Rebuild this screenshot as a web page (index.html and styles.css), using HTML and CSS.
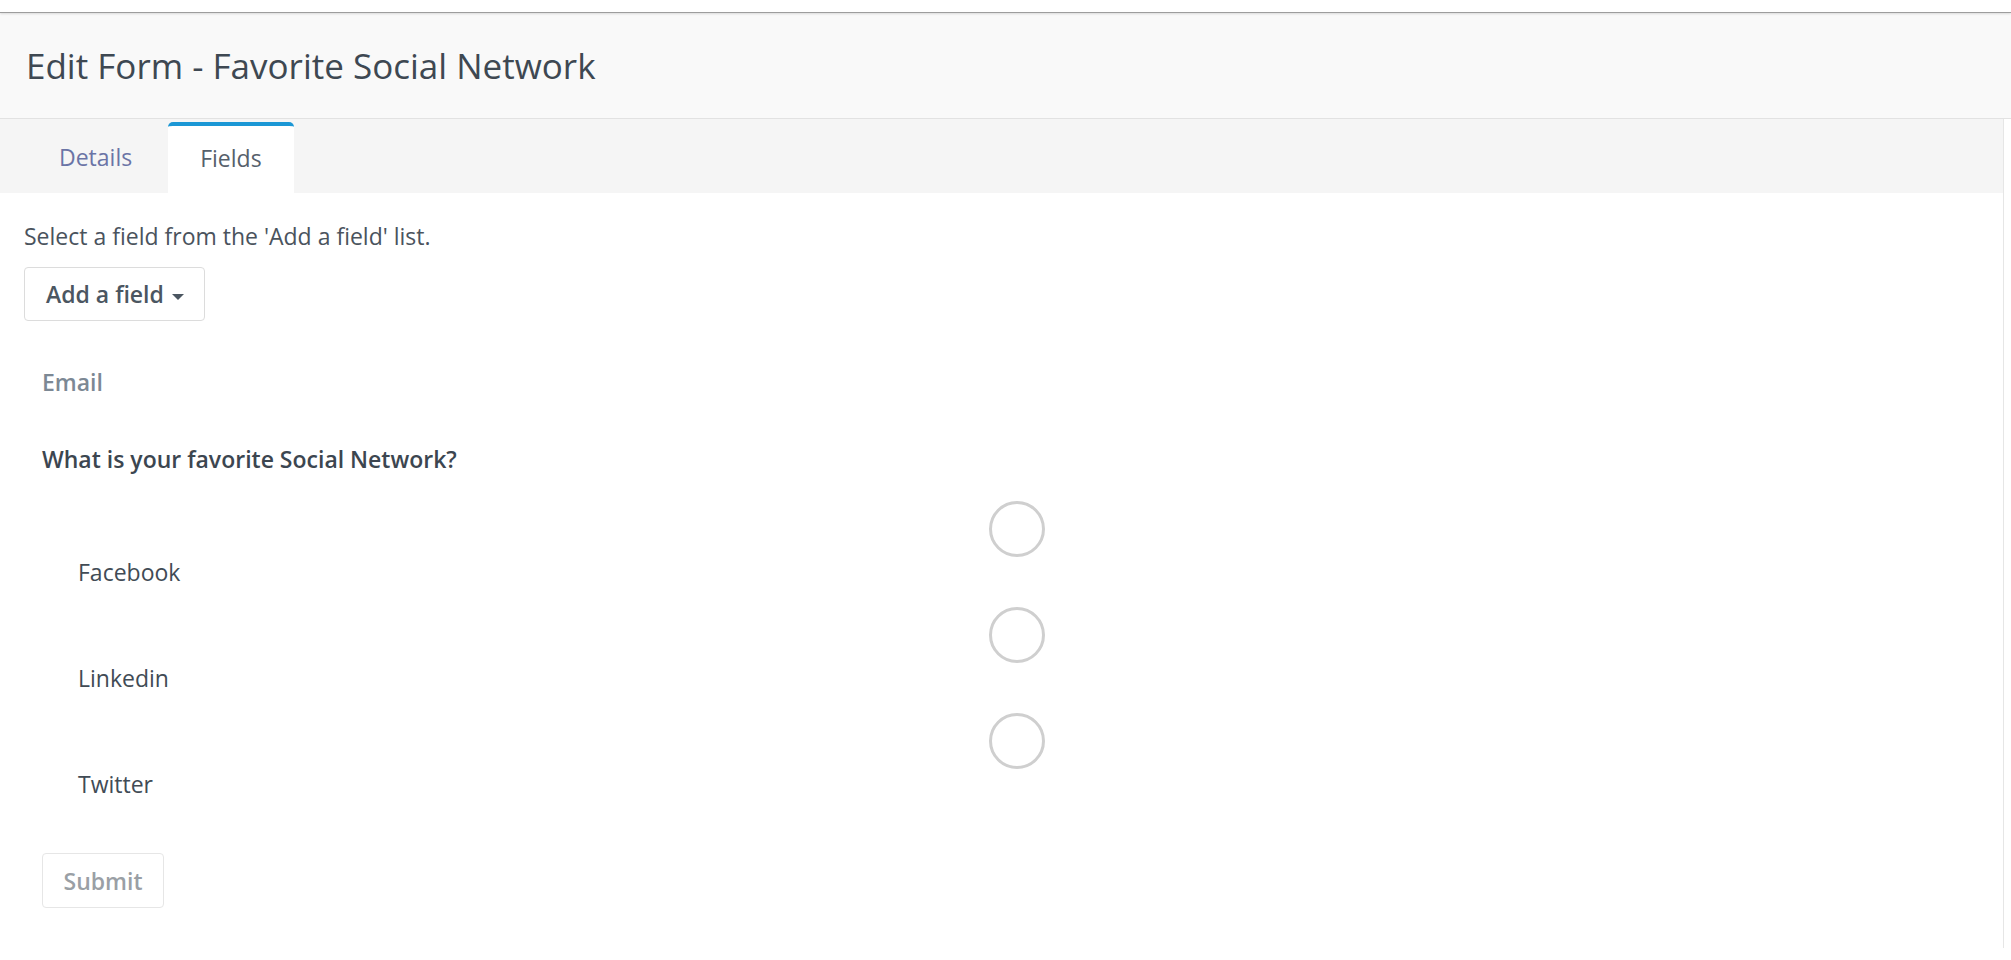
FILE: index.html
```html
<!DOCTYPE html>
<html lang="en">
<head>
    <meta charset="UTF-8">
    <meta name="viewport" content="width=device-width, initial-scale=1.0">
    <title>Edit Form - Favorite Social Network</title>
    <link rel="stylesheet" href="styles.css">
</head>
<body>
    <div class="topbar"></div>

    <header class="page-header">
        <h1>Edit Form - Favorite Social Network</h1>
    </header>

    <div class="panel">
        <nav class="tabs">
            <a class="tab" href="#details">Details</a>
            <a class="tab active" href="#fields">Fields</a>
        </nav>

        <div class="tab-body">
            <p class="hint">Select a field from the 'Add a field' list.</p>
            <button class="btn dropdown">Add a field <span class="caret"></span></button>

            <form class="preview">
                <div class="field-name">Email</div>
                <div class="question">What is your favorite Social Network?</div>

                <div class="choice">
                    <span class="choice-label">Facebook</span>
                    <span class="radio"></span>
                </div>
                <div class="choice">
                    <span class="choice-label">Linkedin</span>
                    <span class="radio"></span>
                </div>
                <div class="choice">
                    <span class="choice-label">Twitter</span>
                    <span class="radio"></span>
                </div>

                <button class="btn submit" type="button">Submit</button>
            </form>
        </div>
    </div>
</body>
</html>
```

FILE: styles.css
```css
*
{
    box-sizing: border-box;
}

body
{
    margin: 0;
    font-family: "Open Sans", "Noto Sans", sans-serif;
    font-size: 23px;
    line-height: 32px;
    color: #444e58;
    background: #fff;
}

.topbar
{
    height: 13px;
    border-bottom: 1px solid #9d9d9d;
    box-shadow: 0 1px 2px rgba(0, 0, 0, 0.12);
    position: relative;
}

.page-header
{
    height: 106px;
    background: #f9f9f9;
    border-bottom: 1px solid #e2e2e2;
    display: flex;
    align-items: center;
    padding-left: 26px;
}

.page-header h1
{
    margin: 0;
    font-size: 35px;
    font-weight: 400;
    color: #3e4852;
}

.panel
{
    width: 2004px;
    border-right: 1px solid #e6e6e6;
    min-height: 767px;
}

.tabs
{
    display: flex;
    gap: 4px;
    height: 74px;
    padding: 3px 0 0 27px;
    background: #f5f5f5;
}

.tab
{
    display: flex;
    align-items: center;
    padding: 0 32px 1px;
    text-decoration: none;
    color: #6a74a6;
}

.tab.active
{
    background: #fff;
    border-top: 4px solid #1b97d5;
    border-radius: 5px 5px 0 0;
    padding-bottom: 4px;
    color: #56606b;
}

.tab-body
{
    padding: 27px 24px 40px;
}

.hint
{
    margin: 0;
    color: #4a535d;
}

.btn
{
    font-family: inherit;
    font-size: 23px;
    font-weight: 600;
    background: #fff;
    border: 1px solid #dcdcdc;
    border-radius: 4px;
    cursor: pointer;
}

.dropdown
{
    margin-top: 15px;
    height: 54px;
    width: 181px;
    padding: 0 0 0 21px;
    text-align: left;
    color: #4b5661;
}

.caret
{
    display: inline-block;
    width: 0;
    height: 0;
    margin-left: 2px;
    vertical-align: middle;
    border-top: 6px solid #4b5661;
    border-left: 6px solid transparent;
    border-right: 6px solid transparent;
}

.preview
{
    padding-left: 18px;
}

.field-name
{
    margin-top: 45px;
    font-weight: 600;
    color: #7c8894;
}

.question
{
    margin-top: 45px;
    font-weight: 600;
    color: #3c4650;
}

.choice
{
    display: grid;
    grid-template-columns: 947px 56px;
    height: 106px;
}

.question + .choice
{
    margin-top: 22px;
}

.choice-label
{
    padding: 59px 0 0 36px;
    color: #414b55;
}

.radio
{
    margin-top: 4px;
    width: 56px;
    height: 56px;
    border: 3px solid #cfcfcf;
    border-radius: 50%;
}

.submit
{
    margin-top: 38px;
    width: 122px;
    height: 55px;
    color: #9a9fa5;
    border-color: #e6e6e6;
}
```
